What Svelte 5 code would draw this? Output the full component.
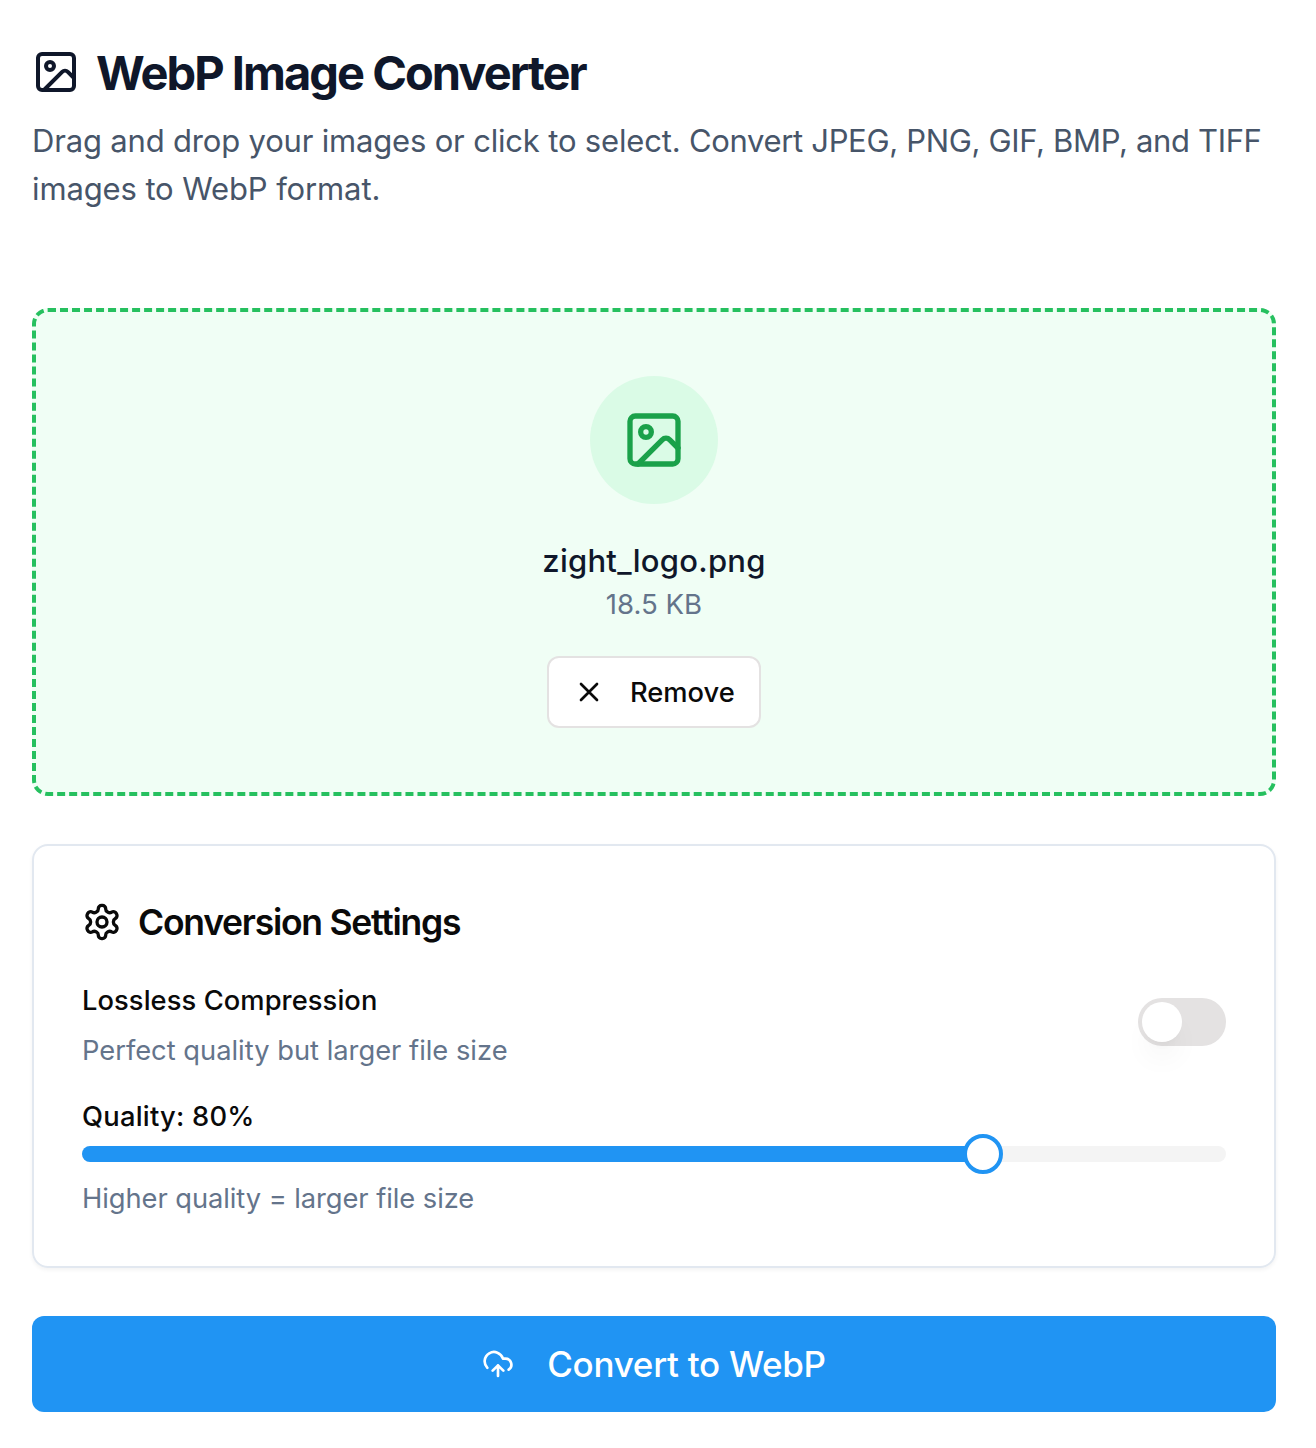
<script>
    let file = { name: 'zight_logo.png', size: '18.5 KB' };
    let lossless = false;
    let quality = 80;

    // thumb travels between the track ends, inset by half its own width
    $: thumbLeft = `calc(${quality}% + ${(0.5 - quality / 100) * 40 - 2}px)`;

    function removeFile() {
        file = null;
    }
</script>

<main>
    <header>
        <h1>
            <svg class="icon" width="48" height="48" viewBox="0 0 24 24">
                <rect x="3" y="3" width="18" height="18" rx="2" />
                <circle cx="9" cy="9" r="2" />
                <path d="m21 15-3.086-3.086a2 2 0 0 0-2.828 0L6 21" />
            </svg>
            <span>WebP Image Converter</span>
        </h1>
        <p>
            Drag and drop your images or click to select. <span class="formats">Convert JPEG, PNG, GIF, BMP, and TIFF</span><br />
            <span class="last">images to WebP format.</span>
        </p>
    </header>

    <section class="dropzone">
        {#if file}
            <div class="circle">
                <svg class="icon" width="64" height="64" viewBox="0 0 24 24">
                    <rect x="3" y="3" width="18" height="18" rx="2" />
                    <circle cx="9" cy="9" r="2" />
                    <path d="m21 15-3.086-3.086a2 2 0 0 0-2.828 0L6 21" />
                </svg>
            </div>
            <div class="file-name"><span>{file.name}</span></div>
            <div class="file-size"><span>{file.size}</span></div>
            <button class="remove" on:click={removeFile}>
                <svg class="icon" width="32" height="32" viewBox="0 0 24 24">
                    <path d="M18 6 6 18M6 6l12 12" />
                </svg>
                <span>Remove</span>
            </button>
        {/if}
    </section>

    <section class="settings">
        <h2>
            <svg class="icon" width="40" height="40" viewBox="0 0 24 24">
                <path d="M12.22 2h-.44a2 2 0 0 0-2 2v.18a2 2 0 0 1-1 1.73l-.43.25a2 2 0 0 1-2 0l-.15-.08a2 2 0 0 0-2.73.73l-.22.38a2 2 0 0 0 .73 2.73l.15.1a2 2 0 0 1 1 1.72v.51a2 2 0 0 1-1 1.74l-.15.09a2 2 0 0 0-.73 2.73l.22.38a2 2 0 0 0 2.73.73l.15-.08a2 2 0 0 1 2 0l.43.25a2 2 0 0 1 1 1.73V20a2 2 0 0 0 2 2h.44a2 2 0 0 0 2-2v-.18a2 2 0 0 1 1-1.73l.43-.25a2 2 0 0 1 2 0l.15.08a2 2 0 0 0 2.73-.73l.22-.39a2 2 0 0 0-.73-2.73l-.15-.08a2 2 0 0 1-1-1.74v-.5a2 2 0 0 1 1-1.74l.15-.09a2 2 0 0 0 .73-2.73l-.22-.38a2 2 0 0 0-2.73-.73l-.15.08a2 2 0 0 1-2 0l-.43-.25a2 2 0 0 1-1-1.73V4a2 2 0 0 0-2-2z" />
                <circle cx="12" cy="12" r="3" />
            </svg>
            <span>Conversion Settings</span>
        </h2>

        <div class="row">
            <div>
                <div class="label"><span>Lossless Compression</span></div>
                <div class="hint perfect"><span>Perfect quality but larger file size</span></div>
            </div>
            <button class="switch" class:on={lossless} aria-label="Lossless Compression" on:click={() => (lossless = !lossless)}>
                <i></i>
            </button>
        </div>

        <div class="label quality"><span>Quality: {quality}%</span></div>
        <div class="slider">
            <div class="fill" style="width: {thumbLeft}"></div>
            <div class="thumb" style="left: {thumbLeft}"></div>
        </div>
        <div class="hint higher"><span>Higher quality = larger file size</span></div>
    </section>

    <button class="convert">
        <svg class="icon" width="32" height="32" viewBox="0 0 24 24">
            <path d="M12 13v8M4 14.899A7 7 0 1 1 15.71 8h1.79a4.5 4.5 0 0 1 2.5 8.242M8 17l4-4 4 4" />
        </svg>
        <span>Convert to WebP</span>
    </button>
</main>

<style>
    :global(body) {
        background: #fff;
    }

    main {
        padding: 48px 40px 36px 32px;
        font-family: Inter, "Liberation Sans", sans-serif;
        color: #0a0a0a;
    }

    button {
        font-family: inherit;
        cursor: pointer;
    }

    .icon {
        flex: none;
        fill: none;
        stroke: currentColor;
        stroke-width: 2;
        stroke-linecap: round;
        stroke-linejoin: round;
    }

    h1, h2, p {
        margin: 0;
    }

    span {
        white-space: nowrap;
    }

    header {
        height: 260px;
    }

    h1 {
        display: flex;
        align-items: center;
        gap: 16px;
        height: 48px;
        font-size: 47px;
        line-height: 48px;
        font-weight: 700;
        letter-spacing: -1.97px;
        color: #0f172a;
    }

    h1 span {
        padding-top: 2px;
    }

    header p {
        margin-top: 21px;
        font-size: 31px;
        line-height: 48px;
        letter-spacing: -0.18px;
        white-space: nowrap;
        color: #475569;
    }

    .formats {
        letter-spacing: -0.33px;
    }

    .last {
        letter-spacing: -0.12px;
    }

    .dropzone {
        box-sizing: border-box;
        height: 488px;
        padding-top: 64px;
        display: flex;
        flex-direction: column;
        align-items: center;
        border: 4px dashed #26c05f;
        border-radius: 16px;
        background: #f0fef5;
    }

    .circle {
        display: flex;
        align-items: center;
        justify-content: center;
        width: 128px;
        height: 128px;
        border-radius: 50%;
        background: #dafbe6;
        color: #1aa14a;
    }

    .file-name {
        margin-top: 33px;
        font-size: 31px;
        line-height: 48px;
        font-weight: 480;
        letter-spacing: 0.25px;
        color: #0f172a;
    }

    .file-size {
        margin-top: -1px;
        font-size: 27.6px;
        line-height: 40px;
        color: #64748b;
    }

    .remove {
        box-sizing: border-box;
        display: flex;
        align-items: center;
        gap: 25px;
        width: 214px;
        height: 72px;
        margin-top: 32px;
        padding: 0 0 0 24px;
        border: 2px solid #e4e2e2;
        border-radius: 12px;
        background: #fff;
        color: #0a0a0a;
        font-size: 27.3px;
        font-weight: 490;
    }

    .settings {
        box-sizing: border-box;
        height: 424px;
        margin-top: 48px;
        padding: 48px;
        border: 2px solid #e2e8f0;
        border-radius: 16px;
        box-shadow: 0 2px 4px rgba(0, 0, 0, 0.05);
    }

    h2 {
        display: flex;
        align-items: center;
        gap: 16px;
        height: 56px;
        font-size: 35.5px;
        font-weight: 600;
        letter-spacing: -1.25px;
    }

    .row {
        display: flex;
        align-items: flex-start;
        justify-content: space-between;
        height: 90px;
        margin-top: 31px;
    }

    .label {
        font-size: 27.3px;
        line-height: 40px;
        font-weight: 480;
        letter-spacing: 0.08px;
    }

    .hint {
        font-size: 27.3px;
        line-height: 40px;
        color: #64748b;
    }

    .perfect {
        margin-top: 10px;
    }

    .switch {
        width: 88px;
        height: 48px;
        margin-top: 17px;
        padding: 4px;
        border: 0;
        border-radius: 24px;
        background: #e4e2e2;
    }

    .switch.on {
        background: #2094f3;
    }

    .switch i {
        display: block;
        width: 40px;
        height: 40px;
        border-radius: 50%;
        background: #fff;
        box-shadow: 0 20px 30px -6px rgba(0, 0, 0, 0.06), 0 8px 12px -8px rgba(0, 0, 0, 0.06);
    }

    .switch.on i {
        transform: translateX(40px);
    }

    .quality {
        margin-top: 26px;
        letter-spacing: 0.25px;
    }

    .slider {
        position: relative;
        height: 16px;
        margin-top: 9px;
        border-radius: 8px;
        background: #f4f4f4;
    }

    .fill {
        height: 16px;
        border-radius: 8px;
        background: #2094f3;
    }

    .thumb {
        position: absolute;
        top: -12px;
        box-sizing: border-box;
        width: 40px;
        height: 40px;
        margin-left: -20px;
        border: 4px solid #2094f3;
        border-radius: 50%;
        background: #fff;
    }

    .higher {
        margin-top: 17px;
        letter-spacing: -0.06px;
    }

    .convert {
        display: flex;
        align-items: center;
        justify-content: center;
        gap: 33px;
        width: 100%;
        height: 96px;
        margin-top: 48px;
        padding: 0;
        border: 0;
        border-radius: 12px;
        background: #2094f3;
        color: #fff;
        font-size: 35px;
        font-weight: 480;
        letter-spacing: -0.28px;
    }
</style>
